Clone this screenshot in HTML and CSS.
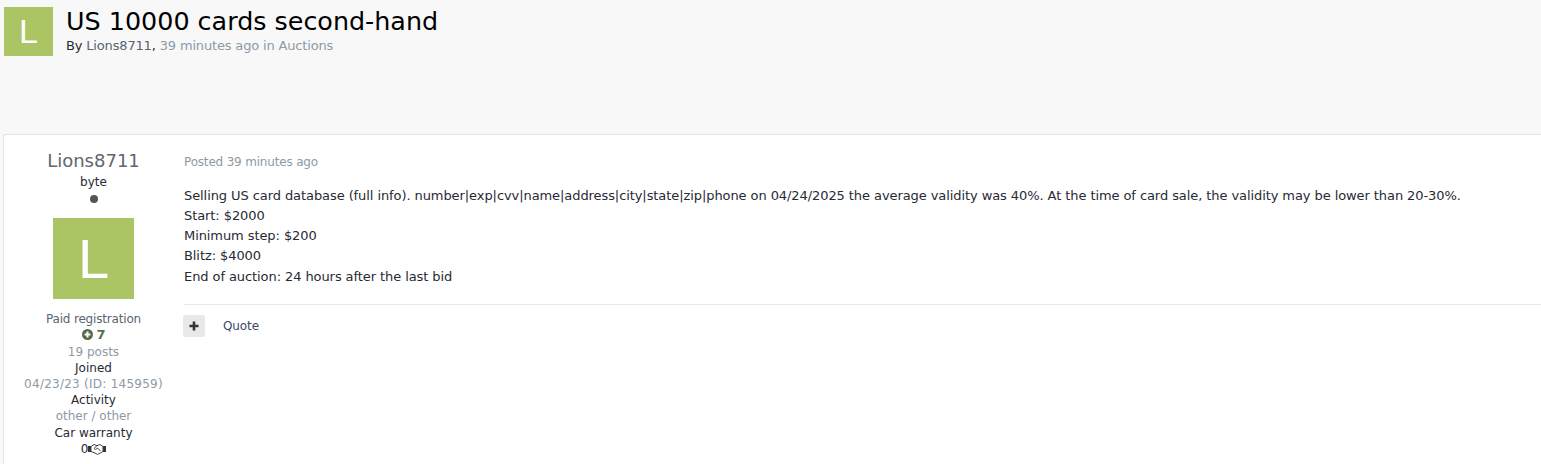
FILE: index.html
```html
<!DOCTYPE html>
<html lang="en">

<head>
    <meta charset="UTF-8">
    <title>US 10000 cards second-hand</title>
    <link rel="stylesheet" href="styles.css">
</head>

<body>

    <!-- Topic header -->
    <header class="topic-header">
        <div class="avatar avatar-small">L</div>
        <div class="topic-title">
            <h1>US 10000 cards second-hand</h1>
            <p>By <a class="author-link" href="#">Lions8711</a>, <span class="muted">39 minutes ago in Auctions</span></p>
        </div>
    </header>

    <!-- Post -->
    <article class="post">
        <aside class="author">
            <h3>Lions8711</h3>
            <div class="rank">byte</div>
            <div class="pip"></div>
            <div class="avatar avatar-large">L</div>
            <ul class="author-info">
                <li class="group">Paid registration</li>
                <li class="reputation">
                    <svg class="rep-icon" viewBox="0 0 12 12">
                        <circle cx="6" cy="6" r="6" fill="#55694a"/>
                        <path d="M6 2.8v6.4M2.8 6h6.4" stroke="#fff" stroke-width="2.2"/>
                    </svg>
                    <span class="rep-value">7</span>
                </li>
                <li class="muted">19 posts</li>
                <li>Joined</li>
                <li class="muted joined-date">04/23/23 (ID: 145959)</li>
                <li>Activity</li>
                <li class="muted">other / other</li>
                <li>Car warranty</li>
                <li class="warranty">0<svg class="deal-icon" viewBox="0 0 18 12">
                        <path d="M0 3h3v6H0zM15 3h3v6h-3z" fill="#333"/>
                        <path d="M3 3.5l3-2 3 1.2 3-1.2 3 2v5l-5.5 3-1.5-1-5-2z" fill="#fff" stroke="#444" stroke-width="1"/>
                        <path d="M9 2.7L6 5.5l1.5 1 2-1.5 3 3" fill="none" stroke="#444" stroke-width="1"/>
                    </svg></li>
            </ul>
        </aside>

        <div class="post-main">
            <div class="post-date">Posted 39 minutes ago</div>
            <div class="post-content">
                <p>Selling US card database (full info). number|exp|cvv|name|address|city|state|zip|phone on 04/24/2025 the average validity was 40%. At the time of card sale, the validity may be lower than 20-30%.</p>
                <p>Start: $2000</p>
                <p>Minimum step: $200</p>
                <p>Blitz: $4000</p>
                <p>End of auction: 24 hours after the last bid</p>
            </div>
            <div class="post-controls">
                <button class="multiquote">
                    <svg viewBox="0 0 10 10"><path d="M5 0.5v9M0.5 5h9" stroke="#333" stroke-width="2.6"/></svg>
                </button>
                <a class="quote-link" href="#">Quote</a>
            </div>
        </div>
    </article>

</body>

</html>
```

FILE: styles.css
```css
* {
    box-sizing: border-box;
}

html,
body {
    height: 100%;
    overflow: hidden;
}

body {
    margin: 0;
    background: #f8f8f8;
    color: #272a34;
    font-family: "DejaVu Sans", Verdana, sans-serif;
    font-size: 13px;
}

a {
    color: inherit;
    text-decoration: none;
}

.muted {
    color: #8d9aa6;
}

.avatar {
    flex: none;
    display: flex;
    align-items: center;
    justify-content: center;
    background: #abc564;
    color: #fff;
    font-family: "Liberation Sans", Arial, sans-serif;
}

.avatar-small {
    width: 49px;
    height: 49px;
    font-size: 34px;
}

.avatar-large {
    width: 81px;
    height: 81px;
    margin: 0 auto;
    font-size: 56px;
}

/* Topic header */
.topic-header {
    display: flex;
    gap: 13px;
    height: 134px;
    padding: 7px 0 0 4px;
}

.topic-title h1 {
    margin: 0;
    color: #000;
    font-size: 25.4px;
    font-weight: 400;
    line-height: 29px;
}

.topic-title p {
    margin: 2px 0 0;
    letter-spacing: -0.16px;
    line-height: 16px;
}

.author-link {
    color: #5a6570;
}

/* Post */
.post {
    display: flex;
    margin-left: 3px;
    height: 330px;
    background: #fff;
    border: 1px solid #e4e4e4;
    border-right: 0;
    border-bottom: 0;
    border-radius: 3px 0 0 0;
}

.author {
    flex: none;
    width: 179px;
    padding-top: 15px;
    text-align: center;
}

.author h3 {
    margin: 0;
    color: #62666c;
    font-size: 18px;
    font-weight: 400;
    line-height: 22px;
}

.rank {
    margin-top: 2px;
    font-size: 12px;
    line-height: 16px;
}

.pip {
    width: 8px;
    height: 8px;
    margin: 5px auto 15px;
    border-radius: 50%;
    background: #555;
}

.author-info {
    margin: 12.2px 0 0;
    padding: 0;
    list-style: none;
    font-size: 12px;
    line-height: 16.2px;
}

.group {
    color: #5a6570;
    letter-spacing: -0.18px;
}

.joined-date {
    letter-spacing: 0.25px;
}

.reputation {
    color: #5b6f4e;
}

.rep-value {
    font-size: 13px;
    font-weight: 700;
}

.rep-icon {
    width: 11px;
    height: 11px;
    vertical-align: -1px;
}

.deal-icon {
    width: 18px;
    height: 12px;
    vertical-align: -2px;
}

.post-main {
    flex: 1;
    padding: 19px 0 0 1px;
}

.post-date {
    color: #8d9aa6;
    font-size: 12px;
    letter-spacing: -0.18px;
    line-height: 16px;
}

.post-content {
    margin-top: 15.7px;
    padding-bottom: 17px;
    border-bottom: 1px solid #eaeaea;
    letter-spacing: -0.08px;
}

.post-content p {
    margin: 0;
    line-height: 20.25px;
}

.post-controls {
    display: flex;
    align-items: center;
    gap: 18px;
    margin: 10px 0 0 -1px;
}

.multiquote {
    display: flex;
    align-items: center;
    justify-content: center;
    width: 22px;
    height: 22px;
    padding: 0;
    background: #e8e8e8;
    border: 0;
    border-radius: 3px;
}

.multiquote svg {
    width: 10px;
    height: 10px;
}

.quote-link {
    color: #3d4a66;
    font-size: 12px;
    letter-spacing: -0.1px;
}
```
